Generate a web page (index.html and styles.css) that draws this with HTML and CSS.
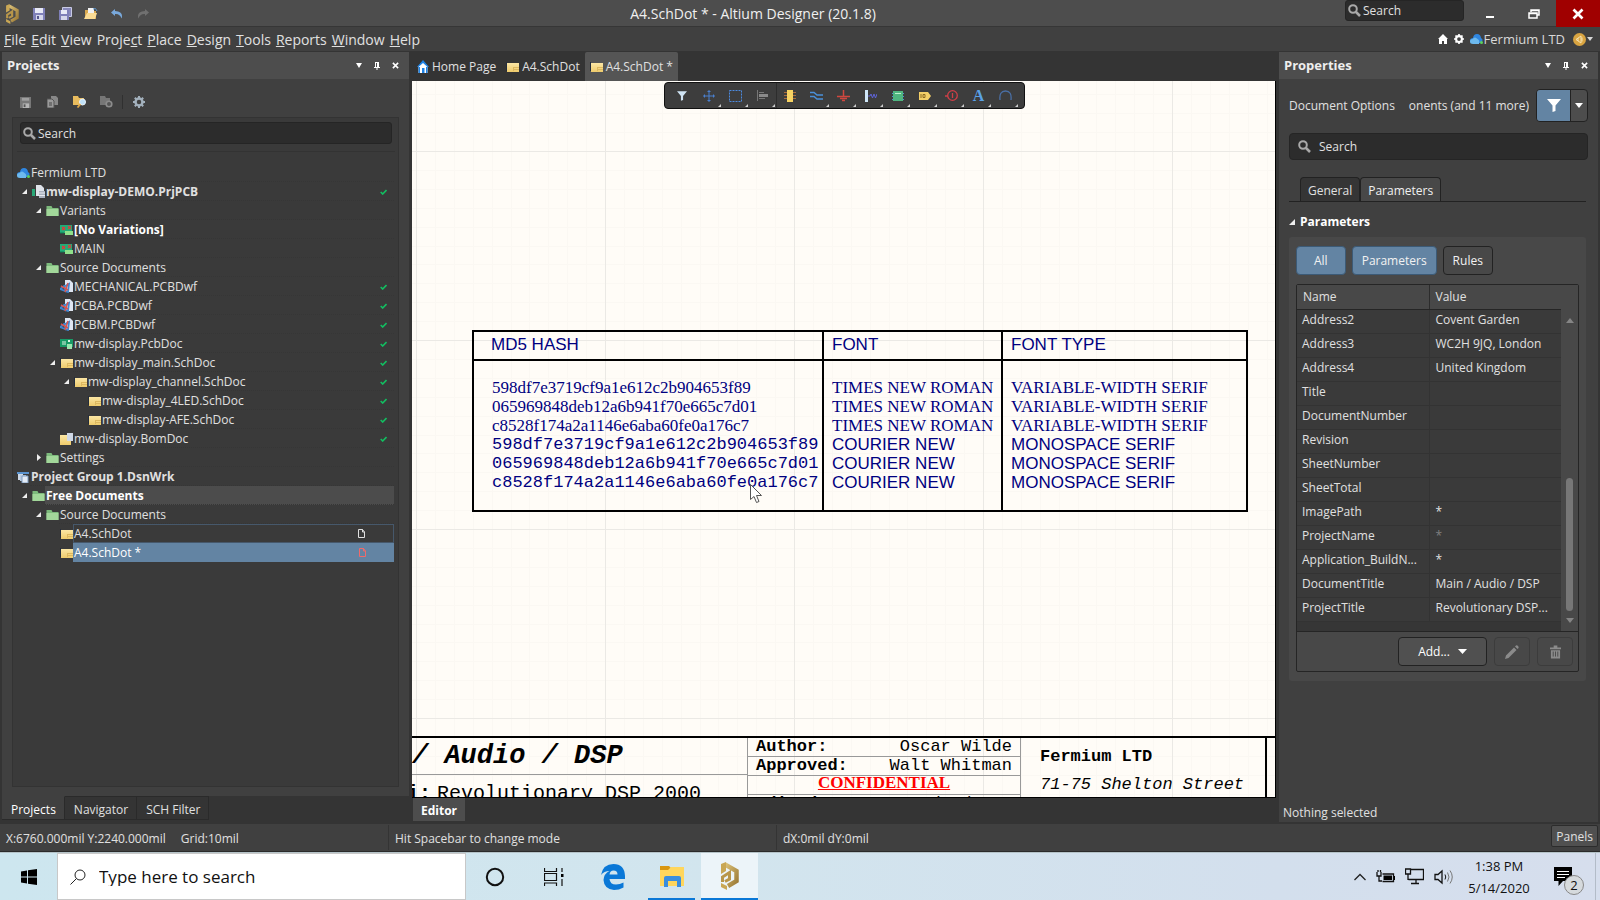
FILE: index.html
```html
<!DOCTYPE html>
<html lang="en">
<head>
    <meta charset="utf-8">
    <title>A4.SchDot * - Altium Designer (20.1.8)</title>
    <link rel="stylesheet" href="styles.css">
</head>
<body>
    <!-- shared icons -->
    <svg class="defs" width="0" height="0" aria-hidden="true">
        <defs>
            <linearGradient id="gold" x1="0" y1="0" x2="1" y2="1"><stop offset="0" stop-color="#dcc27a"/><stop offset="1" stop-color="#9c7a35"/></linearGradient>
            <linearGradient id="sheet" x1="0" y1="0" x2="0" y2="1"><stop offset="0" stop-color="#fbe6a4"/><stop offset="1" stop-color="#eecb6c"/></linearGradient>
            <pattern id="grid" width="189" height="189" patternUnits="userSpaceOnUse" x="4" y="70">
                <path d="M19.500 0V189M38.500 0V189M57.500 0V189M76.500 0V189M95.500 0V189M113.500 0V189M132.500 0V189M151.500 0V189M170.500 0V189M0 19.500H189M0 38.500H189M0 57.500H189M0 76.500H189M0 95.500H189M0 113.500H189M0 132.500H189M0 151.500H189M0 170.500H189" stroke="#fbf8f3"/>
                <path d="M.5 0V189M0 .5H189" stroke="#ebe9e5"/>
            </pattern>
        </defs>
        <symbol id="i-logo" viewBox="0 0 18 28">
            <path d="M4 2.500 15.500 9V19L7 24" fill="none" stroke="url(#gold)" stroke-width="4.500"/>
            <path d="M0 2 5 0V9L0 12ZM0 21 6 24V28L0 25Z" fill="#c9a755"/>
            <path d="M1.500 20V15L8.500 10.500V17L4 19.500" fill="none" stroke="#b8964a" stroke-width="3"/>
        </symbol>
        <symbol id="i-save" viewBox="0 0 12 12"><path d="M0 0H12V12H0Z" fill="#7f80b8"/><path d="M2 0H10V5H2Z" fill="#e8eaf6"/><path d="M3 7H10V12H3Z" fill="#d5d7ea"/><path d="M4 8H6V11H4Z" fill="#55568c"/></symbol>
        <symbol id="i-save-grey" viewBox="0 0 12 12"><path d="M0 0H12V12H0Z" fill="#777"/><path d="M2 1H10V4H2Z" fill="#a0a0a0"/><path d="M3 7H10V12H3Z" fill="#b5b5b5"/><path d="M4 8H6V11H4Z" fill="#555"/></symbol>
        <symbol id="i-saveall" viewBox="0 0 13 13"><path d="M3.500.5H12.500V9.500H3.500Z" fill="#8889bb" stroke="#c9cbe4"/><path d="M0 3H10V13H0Z" fill="#7f80b8"/><path d="M2 3H8V7H2Z" fill="#e8eaf6"/><path d="M2 9H8V13H2Z" fill="#d5d7ea"/></symbol>
        <symbol id="i-open" viewBox="0 0 14 13"><path d="M1 3H6L7 4H12V12H1Z" fill="#d9a951"/><path d="M4 1H10V7H4Z" fill="#f2f2f2"/><path d="M0 12 3 6H13L11 12Z" fill="#fbdc94"/><path d="M9 2Q12 0 13 4" fill="none" stroke="#5b93c9"/></symbol>
        <symbol id="i-undo" viewBox="0 0 12 10"><path d="M4 0 0 3.500 4 7V5Q9 4.500 10.500 9.500 13 3 4 2Z" fill="#79a9dc"/></symbol>
        <symbol id="i-redo" viewBox="0 0 12 10"><path d="M8 0 12 3.500 8 7V5Q3 4.500 1.500 9.500-1 3 8 2Z" fill="#707070"/></symbol>
        <symbol id="i-search" viewBox="0 0 13 13"><circle cx="5" cy="5" r="3.800" fill="none" stroke="#a9a9a9" stroke-width="2"/><path d="M8 8 12 12" stroke="#a9a9a9" stroke-width="2.500"/></symbol>
        <symbol id="i-caret" viewBox="0 0 6 5" preserveAspectRatio="none"><path d="M0 0H6L3 5Z" fill="currentColor"/></symbol>
        <symbol id="i-pin" viewBox="0 0 6 8"><path d="M1 0H5V5H6V6H0V5H1ZM2.500 6H3.500V8H2.500Z" fill="currentColor"/><path d="M2 1H3V5H2Z" fill="#4d4d4d"/></symbol>
        <symbol id="i-close" viewBox="0 0 8 8"><path d="M1 1 7 7M7 1 1 7" stroke="currentColor" stroke-width="1.800"/></symbol>
        <symbol id="i-min" viewBox="0 0 10 10"><path d="M1 7H9V9H1Z" fill="#fff"/></symbol>
        <symbol id="i-restore" viewBox="0 0 12 10"><path d="M3 3V1H11V6H9M3 1.500H11" fill="none" stroke="#fff" stroke-width="1.500"/><path d="M1 4H9V9H1ZM1 4.500H9" fill="none" stroke="#fff" stroke-width="1.500"/></symbol>
        <symbol id="i-house" viewBox="0 0 10 10"><path d="M5 0 10 5H9V10H6V7H4V10H1V5H0Z" fill="#fff"/></symbol>
        <symbol id="i-gear" viewBox="0 0 12 12"><circle cx="6" cy="6" r="3.500" fill="none" stroke="currentColor" stroke-width="2.500"/><path d="M6 0V2.500M6 9.500V12M0 6H2.500M9.500 6H12M1.800 1.800 3.500 3.500M8.500 8.500 10.200 10.200M1.800 10.200 3.500 8.500M8.500 3.500 10.200 1.800" stroke="currentColor" stroke-width="2"/></symbol>
        <symbol id="i-cloud" viewBox="0 0 13 10"><path d="M3 9Q0 9 0 6.500T3 4Q3.500 0 7 0T11 4Q13 5 12.500 7T10 9Z" fill="#2f86e0"/><path d="M3 10Q0 10 0 7.500T2.500 5Q5 2 7.500 5 10 6 9 10Z" fill="#6db9ee"/><circle cx="11.500" cy="8.500" r="1.500" fill="#5bd15b"/></symbol>
        <symbol id="i-home" viewBox="0 0 12 13"><path d="M1.500 6V13H10.500V6L6 2Z" fill="#fff"/><path d="M6 0 12 7H10.500L6 3 1.500 7H0ZM1.500 7H3V13H1.500ZM9 7H10.500V13H9Z" fill="#1e83e6"/><path d="M5 8H7.500V13H5Z" fill="#1e83e6"/></symbol>
        <symbol id="i-sch" viewBox="0 0 13 10"><path d="M1 1H13V10H1Z" fill="url(#sheet)"/><path d="M0 0H1V9H0Z" fill="#222c3c"/><path d="M7 5.500H13M7 7.500H13M7.500 5V9" stroke="#dcb860" fill="none"/></symbol>
        <symbol id="i-folder" viewBox="0 0 12 10"><path d="M0 0H5L6 2H12V10H0Z" fill="#7dba7c"/><path d="M0 3H12V10H0Z" fill="#a2d79a"/></symbol>
        <symbol id="i-variant" viewBox="0 0 13 10"><path d="M0 0H12V8H0Z" fill="#1fae78"/><path d="M5 6H13V10H5Z" fill="#8fe08a"/><path d="M2 2 5 5M5 2 2 5M8 1 11 4M11 1 8 4" stroke="#e23b3b" stroke-width="1.200"/><path d="M0 8H4" stroke="#0e7a52"/></symbol>
        <symbol id="i-prj" viewBox="0 0 13 13"><path d="M0 4H3V11H0ZM4 4H5V11H4Z" fill="#29a777"/><path d="M4 0H9L12 3V11H4Z" fill="#dfe3ea"/><path d="M7 6H13V13H7Z" fill="#aab0bd"/><path d="M7 8H13M7 10.500H13" stroke="#e8ebf0"/></symbol>
        <symbol id="i-dwf" viewBox="0 0 13 13"><path d="M5 0H10L13 3V12H5Z" fill="#dfe6f2"/><path d="M0 9 9 4 8 12ZM4 5 6 12" fill="none" stroke="#3f86d0" stroke-width="1.800"/><path d="M1 6 8 10M5 12 8 3" stroke="#d9544f" stroke-width="1.500"/></symbol>
        <symbol id="i-pcb" viewBox="0 0 13 10"><path d="M0 0H13V8H0Z" fill="#179a66"/><path d="M2 2H6V6H2Z" fill="#7ac6a4"/><path d="M7 5H12V10H7Z" fill="#9be7b0"/><path d="M8 1H10V3H8Z" fill="#d8f5e2"/></symbol>
        <symbol id="i-bom" viewBox="0 0 13 12"><path d="M0 2H11V12H0Z" fill="url(#sheet)"/><path d="M7 0H13V8H7Z" fill="#cfd8e6"/></symbol>
        <symbol id="i-group" viewBox="0 0 13 12"><path d="M0 1H12V3H0Z" fill="#5a93cf"/><path d="M1 3H6V9H1Z" fill="#cdd9e8"/><path d="M3 4H9V10H3Z" fill="#b8c9de"/><path d="M5 5H11V12H5Z" fill="#e4ecf6" stroke="#7c9cc2"/></symbol>
        <symbol id="i-expanded" viewBox="0 0 5 5"><path d="M5 0V5H0Z" fill="#eee"/></symbol>
        <symbol id="i-collapsed" viewBox="0 0 5 7"><path d="M1 0 5 3.500 1 7Z" fill="#eee"/></symbol>
        <symbol id="i-check" viewBox="0 0 7 6"><path d="M.7 3 2.700 5 6.500 1" fill="none" stroke="#12bf61" stroke-width="1.600"/></symbol>
        <symbol id="i-doc" viewBox="0 0 7 9"><path d="M.5.5H4.500L6.500 3V8.500H.5ZM4.500.5V3H6.500" fill="none" stroke="currentColor"/></symbol>
        <symbol id="i-funnel" viewBox="0 0 14 13"><path d="M0 0H14L8.500 6.500V12L5.500 13V6.500Z" fill="currentColor"/></symbol>
    </svg>

    <div class="desktop">
        <header class="titlebar">
            <div class="quick">
                <svg class="logo"><use href="#i-logo"/></svg>
                <button aria-label="Save"><svg width="12" height="12"><use href="#i-save"/></svg></button>
                <button aria-label="Save all"><svg width="13" height="13"><use href="#i-saveall"/></svg></button>
                <button aria-label="Open"><svg width="14" height="13"><use href="#i-open"/></svg></button>
                <button aria-label="Undo"><svg width="12" height="10"><use href="#i-undo"/></svg></button>
                <button aria-label="Redo"><svg width="12" height="10"><use href="#i-redo"/></svg></button>
            </div>
            <h1>A4.SchDot * - Altium Designer (20.1.8)</h1>
            <div class="window-tools">
                <label class="field title-search"><svg width="13" height="13"><use href="#i-search"/></svg><input type="text" placeholder="Search" aria-label="Search everywhere"></label>
                <button class="win" aria-label="Minimize"><svg width="10" height="10"><use href="#i-min"/></svg></button>
                <button class="win" aria-label="Restore"><svg width="12" height="10"><use href="#i-restore"/></svg></button>
                <button class="win win-close" aria-label="Close"><svg width="12" height="12"><use href="#i-close"/></svg></button>
            </div>
        </header>

        <nav class="menubar">
            <button><u>F</u>ile</button>
            <button><u>E</u>dit</button>
            <button><u>V</u>iew</button>
            <button>Proje<u>c</u>t</button>
            <button><u>P</u>lace</button>
            <button><u>D</u>esign</button>
            <button><u>T</u>ools</button>
            <button><u>R</u>eports</button>
            <button><u>W</u>indow</button>
            <button><u>H</u>elp</button>
            <div class="account">
                <svg width="10" height="10"><use href="#i-house"/></svg>
                <svg width="10" height="10"><use href="#i-gear"/></svg>
                <span class="server"><svg width="13" height="10"><use href="#i-cloud"/></svg>Fermium LTD</span>
                <span class="avatar"><svg width="13" height="13" viewBox="0 0 13 13"><circle cx="6.500" cy="6.500" r="6.500" fill="#d9a441"/><path d="M3 6.500 8 3V10ZM9 4.500V8.500M5 5V8" stroke="#f7e2b0" fill="none"/></svg><svg width="6" height="4"><use href="#i-caret"/></svg></span>
            </div>
        </nav>

        <main class="workspace">
            <section class="side">
                <div class="panel projects">
                    <div class="panel-head">
                        <h2>Projects</h2>
                        <button aria-label="Panel menu"><svg width="6" height="5"><use href="#i-caret"/></svg></button>
                        <button aria-label="Pin"><svg width="6" height="8"><use href="#i-pin"/></svg></button>
                        <button aria-label="Close panel"><svg width="7" height="7"><use href="#i-close"/></svg></button>
                    </div>
                    <div class="toolbar">
                        <button aria-label="Save document"><svg width="11" height="11"><use href="#i-save-grey"/></svg></button>
                        <button aria-label="Compile"><svg width="11" height="12" viewBox="0 0 11 12"><path d="M4 0H9L11 2V9H4Z" fill="#888"/><path d="M0 3H5L7 5V12H0Z" fill="#9a9a9a" stroke="#555"/><path d="M2 7H5M2 9H5" stroke="#444"/></svg></button>
                        <button aria-label="Explore"><svg width="14" height="12" viewBox="0 0 14 12"><path d="M0 0H5L6 2H11V9H0Z" fill="#e9bc5e"/><circle cx="9.500" cy="6" r="3" fill="#bfe0f7" stroke="#e8f3fb"/><path d="M7.500 8 4.500 11.500" stroke="#e0a948" stroke-width="1.800"/></svg></button>
                        <button aria-label="Project options"><svg width="13" height="12" viewBox="0 0 13 12"><path d="M0 0H5L6 2H10V9H0Z" fill="#777"/><circle cx="9" cy="8" r="2.800" fill="#555" stroke="#8c8c8c" stroke-width="1.600"/></svg></button>
                        <i class="sep"></i>
                        <button class="settings" aria-label="Settings"><svg width="12" height="12"><use href="#i-gear"/></svg></button>
                    </div>
                    <div class="tree-box">
                        <label class="field tree-search"><svg width="13" height="13"><use href="#i-search"/></svg><input type="text" placeholder="Search" aria-label="Search projects"></label>
                        <ul class="tree">
                            <li class="l0"><svg class="ic" height="10"><use href="#i-cloud"/></svg><span>Fermium LTD</span></li>
                            <li class="l1 bold"><svg class="arrow"><use href="#i-expanded"/></svg><svg class="ic" height="13"><use href="#i-prj"/></svg><span>mw-display-DEMO.PrjPCB</span><svg class="check"><use href="#i-check"/></svg></li>
                            <li class="l2"><svg class="arrow"><use href="#i-expanded"/></svg><svg class="ic" height="10"><use href="#i-folder"/></svg><span>Variants</span></li>
                            <li class="l3 bold white"><i class="arrow"></i><svg class="ic" height="10"><use href="#i-variant"/></svg><span>[No Variations]</span></li>
                            <li class="l3"><i class="arrow"></i><svg class="ic" height="10"><use href="#i-variant"/></svg><span>MAIN</span></li>
                            <li class="l2"><svg class="arrow"><use href="#i-expanded"/></svg><svg class="ic" height="10"><use href="#i-folder"/></svg><span>Source Documents</span></li>
                            <li class="l3"><i class="arrow"></i><svg class="ic" height="13"><use href="#i-dwf"/></svg><span>MECHANICAL.PCBDwf</span><svg class="check"><use href="#i-check"/></svg></li>
                            <li class="l3"><i class="arrow"></i><svg class="ic" height="13"><use href="#i-dwf"/></svg><span>PCBA.PCBDwf</span><svg class="check"><use href="#i-check"/></svg></li>
                            <li class="l3"><i class="arrow"></i><svg class="ic" height="13"><use href="#i-dwf"/></svg><span>PCBM.PCBDwf</span><svg class="check"><use href="#i-check"/></svg></li>
                            <li class="l3"><i class="arrow"></i><svg class="ic" height="10"><use href="#i-pcb"/></svg><span>mw-display.PcbDoc</span><svg class="check"><use href="#i-check"/></svg></li>
                            <li class="l3"><svg class="arrow"><use href="#i-expanded"/></svg><svg class="ic" height="10"><use href="#i-sch"/></svg><span>mw-display_main.SchDoc</span><svg class="check"><use href="#i-check"/></svg></li>
                            <li class="l4"><svg class="arrow"><use href="#i-expanded"/></svg><svg class="ic" height="10"><use href="#i-sch"/></svg><span>mw-display_channel.SchDoc</span><svg class="check"><use href="#i-check"/></svg></li>
                            <li class="l5"><i class="arrow"></i><svg class="ic" height="10"><use href="#i-sch"/></svg><span>mw-display_4LED.SchDoc</span><svg class="check"><use href="#i-check"/></svg></li>
                            <li class="l5"><i class="arrow"></i><svg class="ic" height="10"><use href="#i-sch"/></svg><span>mw-display-AFE.SchDoc</span><svg class="check"><use href="#i-check"/></svg></li>
                            <li class="l3"><i class="arrow"></i><svg class="ic" height="12"><use href="#i-bom"/></svg><span>mw-display.BomDoc</span><svg class="check"><use href="#i-check"/></svg></li>
                            <li class="l2"><svg class="arrow closed"><use href="#i-collapsed"/></svg><svg class="ic" height="10"><use href="#i-folder"/></svg><span>Settings</span></li>
                            <li class="l0 bold"><svg class="ic" height="12"><use href="#i-group"/></svg><span>Project Group 1.DsnWrk</span></li>
                            <li class="l1 bold white"><svg class="arrow"><use href="#i-expanded"/></svg><svg class="ic" height="10"><use href="#i-folder"/></svg><span class="group">Free Documents</span></li>
                            <li class="l2"><svg class="arrow"><use href="#i-expanded"/></svg><svg class="ic" height="10"><use href="#i-folder"/></svg><span>Source Documents</span></li>
                            <li class="l3"><i class="arrow"></i><svg class="ic" height="10"><use href="#i-sch"/></svg><span class="open">A4.SchDot<svg class="state"><use href="#i-doc"/></svg></span></li>
                            <li class="l3"><i class="arrow"></i><svg class="ic" height="10"><use href="#i-sch"/></svg><span class="selected">A4.SchDot *<svg class="state modified"><use href="#i-doc"/></svg></span></li>
                        </ul>
                    </div>
                </div>
                <div class="panel-tabs">
                    <button class="active">Projects</button>
                    <button>Navigator</button>
                    <button>SCH Filter</button>
                </div>
            </section>

            <section class="editor">
                <div class="doc-tabs">
                    <button><svg width="12" height="13"><use href="#i-home"/></svg>Home Page</button>
                    <button><svg width="13" height="10"><use href="#i-sch"/></svg>A4.SchDot</button>
                    <button class="active"><svg width="13" height="10"><use href="#i-sch"/></svg>A4.SchDot *</button>
                </div>
                <div class="canvas">
                    <svg class="grid" width="100%" height="100%"><rect width="100%" height="100%" fill="url(#grid)"/></svg>

                    <div class="active-bar">
                        <button class="plain" aria-label="Filter"><svg width="10" height="10" class="pale"><use href="#i-funnel"/></svg></button>
                        <button aria-label="Move"><svg width="12" height="12" viewBox="0 0 12 12"><path d="M6 0V12M0 6H12M4.500 1.500H7.500M4.500 10.500H7.500M1.500 4.500V7.500M10.500 4.500V7.500" stroke="#4a80cf"/></svg></button>
                        <button aria-label="Select"><svg width="13" height="12" viewBox="0 0 13 12"><path d="M.5.5H12.500V11.500H.5Z" fill="none" stroke="#4c8be0" stroke-dasharray="2 1"/></svg></button>
                        <button aria-label="Align"><svg width="11" height="11" viewBox="0 0 11 11"><path d="M.5 0V11M2 2.500H7M2 8.500H8" stroke="#777"/><path d="M2 4H11V7H2Z" fill="#8a8a8a"/></svg></button>
                        <button class="plain part" aria-label="Place part"><svg width="12" height="12" viewBox="0 0 12 12"><path d="M0 2.500H12M0 5.500H12M0 8.500H12" stroke="#a96b3b"/><path d="M3 0H9V12H3Z" fill="#f6d263"/></svg></button>
                        <button aria-label="Place wire"><svg width="13" height="9" viewBox="0 0 13 9"><path d="M0 1.500H4L7 4H13M0 5.500H4L7 8H13" fill="none" stroke="#4a90d9" stroke-width="1.500"/></svg></button>
                        <button aria-label="Place ground"><svg width="13" height="12" viewBox="0 0 13 12"><path d="M6.500 0V6M0 6.500H13M3 8.500H10M5 10.500H8" stroke="#d0473f" stroke-width="1.500"/></svg></button>
                        <button aria-label="Place harness"><svg width="12" height="12" viewBox="0 0 12 12"><path d="M0 0H3V12H0Z" fill="#cfe6f8"/><path d="M3 6H5L6 4 7.500 8 9 4 10.500 8 12 4" fill="none" stroke="#5e63d6"/></svg></button>
                        <button aria-label="Place sheet symbol"><svg width="12" height="10" viewBox="0 0 12 10"><path d="M0 2.500H12M0 5.500H12M0 8.500H12" stroke="#4a90d9"/><path d="M1 0H11V10H1Z" fill="#4fb580"/><path d="M3 2H9V3H3Z" fill="#bdf0cd"/></svg></button>
                        <button aria-label="Place port"><svg width="12" height="8" viewBox="0 0 12 8"><path d="M0 0H9L12 4 9 8H0Z" fill="#f4cf67"/><path d="M2 2V6M4 2.500H6V5.500H4Z" fill="none" stroke="#8c6a22"/></svg></button>
                        <button aria-label="Place directive"><svg width="13" height="12" viewBox="0 0 13 12"><circle cx="7.500" cy="5.500" r="4.800" fill="none" stroke="#cf3f47" stroke-width="1.300"/><path d="M0 6H3M7.500 3V8" stroke="#cf3f47" stroke-width="1.300"/></svg></button>
                        <button class="letter" aria-label="Place text">A</button>
                        <button aria-label="Place arc"><svg width="13" height="11" viewBox="0 0 13 11"><path d="M1 10Q0 1 6.500 1T12 10" fill="none" stroke="#4a6fa5" stroke-width="1.300"/></svg></button>
                    </div>

                    <table class="hash">
                        <colgroup><col class="c-hash"><col class="c-font"><col class="c-type"></colgroup>
                        <thead><tr><th>MD5 HASH</th><th>FONT</th><th>FONT TYPE</th></tr></thead>
                        <tbody>
                            <tr class="times"><td>598df7e3719cf9a1e612c2b904653f89</td><td>TIMES NEW ROMAN</td><td>VARIABLE-WIDTH SERIF</td></tr>
                            <tr class="times"><td>065969848deb12a6b941f70e665c7d01</td><td>TIMES NEW ROMAN</td><td>VARIABLE-WIDTH SERIF</td></tr>
                            <tr class="times"><td>c8528f174a2a1146e6aba60fe0a176c7</td><td>TIMES NEW ROMAN</td><td>VARIABLE-WIDTH SERIF</td></tr>
                            <tr class="courier"><td>598df7e3719cf9a1e612c2b904653f89</td><td>COURIER NEW</td><td>MONOSPACE SERIF</td></tr>
                            <tr class="courier"><td>065969848deb12a6b941f70e665c7d01</td><td>COURIER NEW</td><td>MONOSPACE SERIF</td></tr>
                            <tr class="courier"><td>c8528f174a2a1146e6aba60fe0a176c7</td><td>COURIER NEW</td><td>MONOSPACE SERIF</td></tr>
                        </tbody>
                    </table>

                    <svg class="pointer" width="13" height="20" viewBox="0 0 13 20"><path d="M.5.5V15.500L4 12.500 6.500 18.500 9 17.500 6.500 11.500H11.500Z" fill="#fff" stroke="#555"/></svg>

                    <!-- sheet title block, runs off the bottom of the view -->
                    <div class="title-block">
                        <div class="tb-main">
                            <p class="tb-title">/ Audio / DSP</p>
                            <p class="tb-project"><b>i:</b>Revolutionary DSP 2000</p>
                        </div>
                        <dl class="tb-people">
                            <div><dt>Author:</dt><dd>Oscar Wilde</dd></div>
                            <div><dt>Approved:</dt><dd>Walt Whitman</dd></div>
                            <div class="secret">CONFIDENTIAL</div>
                            <div><dt>Edited:</dt><dd>5/14/2020</dd></div>
                        </dl>
                        <address class="tb-address"><b>Fermium LTD</b><span>71-75 Shelton Street</span><span>Covent Garden</span></address>
                    </div>
                </div>
                <div class="editor-tabs"><button>Editor</button></div>
            </section>

            <aside class="panel properties">
                <div class="panel-head">
                    <h2>Properties</h2>
                    <button aria-label="Panel menu"><svg width="6" height="5"><use href="#i-caret"/></svg></button>
                    <button aria-label="Pin"><svg width="6" height="8"><use href="#i-pin"/></svg></button>
                    <button aria-label="Close panel"><svg width="7" height="7"><use href="#i-close"/></svg></button>
                </div>
                <div class="prop-body">
                    <div class="filter-row">
                        <span>Document Options</span>
                        <span class="scope">onents (and 11 more)</span>
                        <div class="split">
                            <button class="on" aria-label="Selection filter"><svg width="14" height="13"><use href="#i-funnel"/></svg></button>
                            <button aria-label="Filter list"><svg width="8" height="5"><use href="#i-caret"/></svg></button>
                        </div>
                    </div>
                    <label class="field prop-search"><svg width="13" height="13"><use href="#i-search"/></svg><input type="text" placeholder="Search" aria-label="Search properties"></label>
                    <div class="prop-tabs">
                        <button>General</button>
                        <button class="active">Parameters</button>
                    </div>
                    <h3><svg width="6" height="6"><use href="#i-expanded"/></svg>Parameters</h3>
                    <div class="group-box">
                        <div class="chips">
                            <button class="on">All</button>
                            <button class="on">Parameters</button>
                            <button>Rules</button>
                        </div>
                        <div class="list">
                            <div class="list-view">
                                <table class="params">
                                    <colgroup><col class="p-name"><col class="p-value"></colgroup>
                                    <thead><tr><th>Name</th><th>Value</th></tr></thead>
                                    <tbody>
                                        <tr><td>Address2</td><td>Covent Garden</td></tr>
                                        <tr><td>Address3</td><td>WC2H 9JQ, London</td></tr>
                                        <tr><td>Address4</td><td>United Kingdom</td></tr>
                                        <tr><td>Title</td><td></td></tr>
                                        <tr><td>DocumentNumber</td><td></td></tr>
                                        <tr><td>Revision</td><td></td></tr>
                                        <tr><td>SheetNumber</td><td></td></tr>
                                        <tr><td>SheetTotal</td><td></td></tr>
                                        <tr><td>ImagePath</td><td>*</td></tr>
                                        <tr><td>ProjectName</td><td class="dim">*</td></tr>
                                        <tr><td>Application_BuildN...</td><td>*</td></tr>
                                        <tr><td>DocumentTitle</td><td>Main / Audio / DSP</td></tr>
                                        <tr><td>ProjectTitle</td><td>Revolutionary DSP...</td></tr>
                                    </tbody>
                                </table>
                                <div class="scroll">
                                    <svg class="up" width="8" height="5"><use href="#i-caret"/></svg>
                                    <i class="thumb"></i>
                                    <svg width="8" height="5"><use href="#i-caret"/></svg>
                                </div>
                            </div>
                            <div class="list-foot">
                                <button class="add">Add...<svg width="9" height="5"><use href="#i-caret"/></svg></button>
                                <button class="off" aria-label="Edit"><svg width="14" height="14" viewBox="0 0 14 14"><path d="M0 14 1 10.500 9 2.500 11.500 5 3.500 13ZM10 1.500 11 .5Q12 0 13 1T13.500 3L12.500 4Z" fill="#8b8b8b"/></svg></button>
                                <button class="off" aria-label="Delete"><svg width="11" height="14" viewBox="0 0 12 14"><path d="M0 2H4V0H8V2H12V4H0ZM1 5H11V14H1Z" fill="#8b8b8b"/><path d="M3.500 6.500V12M6 6.500V12M8.500 6.500V12" stroke="#484848"/></svg></button>
                            </div>
                        </div>
                    </div>
                </div>
                <p class="selection">Nothing selected</p>
            </aside>
        </main>

        <footer class="status">
            <span class="coords"><span>X:6760.000mil Y:2240.000mil</span><span>Grid:10mil</span></span>
            <span class="hint">Hit Spacebar to change mode</span>
            <span class="delta">dX:0mil dY:0mil</span>
            <button>Panels</button>
        </footer>

        <div class="taskbar">
            <button class="start" aria-label="Start"><svg width="16" height="16" viewBox="0 0 16 16"><path d="M0 2.500 6 1.500V7.500H0ZM7 1.300 16 0V7.500H7ZM0 8.500H6V14.500L0 13.500ZM7 8.500H16V16L7 14.700Z" fill="#000"/></svg></button>
            <label class="task-search"><svg width="16" height="16" viewBox="0 0 16 16"><circle cx="10" cy="6" r="5" fill="none" stroke="#222"/><path d="M6.500 9.500.5 15.500" stroke="#222"/></svg><input type="text" placeholder="Type here to search" aria-label="Type here to search"></label>
            <button class="task" aria-label="Cortana"><svg width="20" height="20" viewBox="0 0 20 20"><circle cx="10" cy="10" r="8.200" fill="none" stroke="#111" stroke-width="2"/></svg></button>
            <button class="task" aria-label="Task view"><svg width="20" height="20" viewBox="0 0 20 20"><path d="M.5 1V4.500H12.500V1M.5 19V16H12.500V19M.5 6.500H12.500V13.500H.5ZM18 1V5M18 12V19" fill="none" stroke="#111" stroke-width="1.200"/><path d="M17 7H19.500V10H17Z"/></svg></button>
            <button class="task" aria-label="Edge"><svg width="24" height="26" viewBox="0 0 24 26"><path d="M0 11Q2 0 12.500 0 23.500 0 24 12V15H8.500Q9 20.500 15 20.500 19 20.500 22.500 18.500V23.500Q18 26 13 26 3 25 2.500 16 3 9.500 8.500 7 3 7 0 11ZM8.500 10.500H16.500Q16.500 6.500 12.500 6.500 9 6.500 8.500 10.500Z" fill="#0a78d7" fill-rule="evenodd"/></svg></button>
            <button class="task running" aria-label="File Explorer"><svg width="26" height="22" viewBox="0 0 26 22"><path d="M1 1H10L13 4V7H1Z" fill="#d9960f"/><path d="M1 5H9L12 2H25V21H1Z" fill="#ffd65c"/><path d="M5 22V13Q5 11 7 11H20Q22 11 22 13V22H18V16H9V22Z" fill="#3a8ede"/></svg></button>
            <button class="task running current" aria-label="Altium Designer"><svg width="18" height="28"><use href="#i-logo"/></svg></button>
            <div class="tray">
                <svg width="12" height="8" viewBox="0 0 12 8"><path d="M.5 7 6 1.500 11.500 7" fill="none" stroke="#222" stroke-width="1.300"/></svg>
                <svg width="19" height="14" viewBox="0 0 19 14"><path d="M1 2V6H5V2M2 2V0M4.500 2V0M3 6V11H6M6.500 4H17.500V11.500H6.500" fill="none" stroke="#111" stroke-width="1.300"/><path d="M7.500 5.500H16V10H7.500ZM18 6H19V10H18Z"/></svg>
                <svg width="19" height="17" viewBox="0 0 19 17"><path d="M6 1.500H18.500V11.500H3.500M11 12V15M6 15.500H14M.5 1H5.500V6H.5ZM3 6V12" fill="none" stroke="#111" stroke-width="1.300"/></svg>
                <svg width="20" height="16" viewBox="0 0 20 16"><path d="M1 5.500H4L8 2V14L4 10.500H1Z" fill="none" stroke="#111" stroke-width="1.300"/><path d="M11 5.500Q12.500 8 11 10.500" fill="none" stroke="#111"/><path d="M13.500 3.500Q16.500 8 13.500 12.500M16 1.500Q20.500 8 16 14.500" fill="none" stroke="#777"/></svg>
            </div>
            <div class="clock"><span>1:38 PM</span><span>5/14/2020</span></div>
            <button class="notes" aria-label="Notifications"><svg width="18" height="19" viewBox="0 0 18 19"><path d="M0 0H18V14H9L4.500 19V14H0Z"/><path d="M3 4.500H15M3 7.500H15M3 10.500H11" stroke="#fff"/></svg><span class="badge">2</span></button>
        </div>
    </div>
</body>
</html>
```
FILE: styles.css
```css
* {
    box-sizing: border-box;
}
body {
    margin: 0;
    font-family: "Open Sans", "Noto Sans", sans-serif;
    font-size: 12px;
    line-height: 19px;
    color: #e0e0e0;
    background: #343434;
}
button, input {
    font: inherit;
    color: inherit;
    background: none;
    border: 0;
    padding: 0;
    margin: 0;
}
button {
    display: flex;
    align-items: center;
    justify-content: center;
    white-space: nowrap;
}
input::placeholder {
    color: inherit;
    opacity: 1;
}
svg {
    display: block;
    flex: none;
}
h1, h2, h3, p, ul, dl, dd {
    margin: 0;
    padding: 0;
}
.defs {
    position: absolute;
}
.desktop {
    display: flex;
    flex-direction: column;
    height: 100vh;
    overflow: hidden;
}
.field {
    display: flex;
    align-items: center;
    background: #2c2c2c;
    border: 1px solid #252525;
    border-radius: 3px;
}
.field input {
    flex: 1;
    min-width: 0;
}

/* title bar */
.titlebar {
    display: grid;
    grid-template-columns: 1fr auto 1fr;
    height: 27px;
    background: #4d4d4d;
    border-bottom: 1px solid #363636;
}
.titlebar h1 {
    font-size: 14px;
    font-weight: 400;
    line-height: 27px;
    color: #f0f0f0;
    padding-right: 94px;
}
.quick {
    display: flex;
    align-items: center;
    gap: 14px;
    padding-left: 6px;
}
.quick button {
    width: 12px;
}
.logo {
    width: 13px;
    height: 20px;
}
.window-tools {
    display: flex;
    justify-content: flex-end;
}
.title-search {
    width: 119px;
    height: 21px;
    padding-left: 2px;
    gap: 2px;
    margin-right: 4px;
}
.win {
    width: 44px;
}
.win-close {
    background: #a00000;
    color: #fff;
}

/* menu */
.menubar {
    display: flex;
    align-items: center;
    gap: 5px;
    height: 24px;
    padding: 0 7px 0 4px;
    background: #404040;
    font-size: 14px;
}
.account {
    display: flex;
    align-items: center;
    gap: 6px;
    margin-left: auto;
    font-size: 13px;
    color: #fff;
}
.server, .avatar {
    display: flex;
    align-items: center;
    gap: 1px;
    color: #d8d8d8;
}
.avatar {
    margin-left: 2px;
}

/* workspace */
.workspace {
    flex: 1;
    display: flex;
    min-height: 0;
    padding: 1px 2px 2px;
}
.side {
    width: 407px;
    display: flex;
    flex-direction: column;
    margin-right: 3px;
}
.panel {
    display: flex;
    flex-direction: column;
    background: #404040;
}
.projects {
    flex: 1;
}
.panel-head {
    display: flex;
    align-items: center;
    gap: 12px;
    height: 27px;
    padding: 0 10px 0 5px;
    background: #4d4d4d;
    color: #fff;
}
.panel-head h2 {
    flex: 1;
    font-size: 13px;
    font-weight: 700;
    color: #eee;
}
.toolbar {
    display: flex;
    align-items: center;
    gap: 12px;
    height: 38px;
    padding: 8px 16px 0;
}
.toolbar button {
    width: 15px;
}
.sep {
    width: 1px;
    height: 14px;
    margin: 0 -4px;
    background: #303030;
}
.toolbar .settings {
    color: #a3b1bd;
}
.tree-box {
    flex: 1;
    margin: 0 10px 9px;
    padding: 4px 3px 0 4px;
    border: 1px solid #333;
    background: #3a3a3a;
}
.tree-search {
    height: 22px;
    margin: 0 3px;
    padding-left: 2px;
    gap: 2px;
}
.tree {
    list-style: none;
    margin: 7px 0 0;
    padding-top: 11px;
    border-top: 1px solid #333;
}
.tree li {
    display: flex;
    align-items: center;
    height: 19px;
}
.tree li span {
    display: flex;
    flex: 1;
    align-items: center;
    height: 19px;
    padding-left: 1px;
    margin-right: 1px;
    border-bottom: 1px dotted #363636;
}
.tree .ic {
    width: 13px;
}
.tree .arrow {
    width: 5px;
    height: 5px;
    margin-right: 5px;
}
.tree .closed {
    height: 7px;
}
.tree .l0 {
    padding-left: 0;
}
.tree .l1 {
    padding-left: 5px;
}
.tree .l2 {
    padding-left: 19px;
}
.tree .l3 {
    padding-left: 33px;
}
.tree .l4 {
    padding-left: 47px;
}
.tree .l5 {
    padding-left: 61px;
}
.bold {
    font-weight: 700;
}
.white {
    color: #fff;
}
.tree .check {
    width: 7px;
    height: 6px;
    margin: 0 8px 0 -15px;
}
.tree .group {
    background: #4c4c4c;
}
.tree .open {
    border: 1px solid #46586b;
    padding-left: 0;
}
.tree .selected {
    background: #6384a3;
    border: 0;
    color: #fff;
}
.state {
    width: 7px;
    height: 9px;
    margin-left: auto;
    margin-right: 28px;
}
.modified {
    color: #f06a6a;
}
.panel-tabs {
    display: flex;
    height: 26px;
}
.panel-tabs button {
    height: 24px;
    padding: 2px 8px 0 9px;
    border: 1px solid #2a2a2a;
    border-left-width: 0;
}
.panel-tabs .active {
    background: #404040;
    border-top-color: #404040;
    color: #fff;
}

/* editor */
.editor {
    flex: 1;
    min-width: 0;
    display: flex;
    flex-direction: column;
}
.doc-tabs {
    display: flex;
    height: 29px;
}
.doc-tabs button {
    gap: 3px;
    padding: 0 5px 0 5px;
}
.doc-tabs .active {
    background: #555;
    border-radius: 2px 2px 0 0;
}
.canvas {
    position: relative;
    flex: 1;
    overflow: hidden;
    background: #fffcf7;
    border: solid #000;
    border-width: 0 1px 1px 0;
}
.grid {
    position: absolute;
    inset: 0;
}
.active-bar {
    position: absolute;
    top: 1px;
    left: 252px;
    display: flex;
    height: 27px;
    padding: 0 5px 0 3px;
    background: #3d3d3d;
    border: 1px solid #111;
    border-radius: 4px;
}
.active-bar button {
    position: relative;
    width: 27px;
}
.active-bar button::after {
    content: "";
    position: absolute;
    right: 1px;
    bottom: 1px;
    border: solid transparent;
    border-width: 3px 0 0 3px;
    border-right: 3px solid #ccc;
    border-top-color: transparent;
    border-left-width: 0;
}
.active-bar .plain::after {
    display: none;
}
.active-bar .pale {
    color: #cfe3f3;
}
.active-bar .part {
    border-left: 1px solid #2d2d2d;
}
.active-bar .letter {
    font: bold 16px "Liberation Serif", serif;
    color: #5aa2e6;
}
.hash {
    position: absolute;
    top: 249px;
    left: 60px;
    width: 776px;
    table-layout: fixed;
    border-collapse: collapse;
    border: 2px solid #000;
    font: 17px/19px "Liberation Sans", sans-serif;
    color: #000080;
}
.c-hash {
    width: 350px;
}
.c-font {
    width: 179px;
}
.hash th {
    height: 29px;
    padding: 0 8px 2px;
    border: 2px solid #000;
    font-weight: 400;
    text-align: left;
}
.hash th:first-child {
    padding-left: 17px;
}
.hash td {
    height: 19px;
    padding: 0 8px;
    border: solid #000;
    border-width: 0 2px;
    white-space: nowrap;
}
.hash td:first-child {
    padding-left: 18px;
    padding-right: 0;
}
.hash tbody tr:first-child td {
    height: 36px;
    padding-top: 17px;
}
.hash tbody tr:last-child td {
    height: 37px;
    padding-bottom: 18px;
}
.times td {
    font-family: "Liberation Serif", serif;
}
.courier td:first-child {
    font-family: "Liberation Mono", monospace;
}
.pointer {
    position: absolute;
    top: 403px;
    left: 338px;
}
.title-block {
    position: absolute;
    left: 0;
    right: 0;
    top: 655px;
    display: grid;
    grid-template-columns: 335px 274px 1fr;
    height: 90px;
    border-top: 2px solid #000;
    font: 17px/17px "Liberation Mono", monospace;
    color: #000;
    white-space: nowrap;
}
.title-block p {
    height: 37px;
    border-bottom: 1px solid #999;
}
.title-block .tb-title {
    font-size: 27px;
    font-weight: 700;
    font-style: italic;
    line-height: 36px;
}
.title-block .tb-project {
    font-size: 20px;
    line-height: 38px;
    border: 0;
}
.tb-project b {
    margin: 0 6px 0 -5px;
}
.tb-people {
    border: solid #999;
    border-width: 0 1px;
}
.tb-people div {
    display: flex;
    justify-content: space-between;
    height: 19px;
    padding: 0 8px;
    border-bottom: 1px solid #999;
}
.tb-people dt {
    font-weight: 700;
}
.tb-people .secret {
    justify-content: center;
    font-family: "Liberation Serif", serif;
    font-weight: 700;
    line-height: 14px;
    color: #f00;
    text-decoration: underline;
}
.tb-address {
    display: flex;
    flex-direction: column;
    gap: 11px;
    margin-right: 8px;
    padding: 10px 0 0 19px;
    border-right: 2px solid #000;
}
.tb-address b {
    font-style: normal;
}
.editor-tabs {
    height: 24px;
    display: flex;
    padding-left: 1px;
}
.editor-tabs button {
    height: 23px;
    padding: 2px 8px 0;
    background: #4d4d4d;
    color: #fff;
    font-weight: 700;
}

/* properties */
.properties {
    width: 319px;
    margin-left: 3px;
}
.prop-body {
    flex: 1;
    padding: 10px 10px 0;
}
.filter-row {
    display: flex;
    align-items: center;
    white-space: nowrap;
}
.scope {
    display: flex;
    justify-content: flex-end;
    flex: 1;
    overflow: hidden;
    margin: 0 7px 0 10px;
}
.split {
    display: flex;
    height: 33px;
    border: 1px solid #222;
    border-radius: 4px;
    background: #4d4d4d;
    color: #fff;
    overflow: hidden;
}
.split button {
    width: 16px;
}
.split .on {
    width: 34px;
    border-right: 1px solid #222;
}
.on {
    background: #6384a3;
}
.prop-search {
    height: 27px;
    margin-top: 11px;
    padding-left: 8px;
    gap: 8px;
    border-radius: 4px;
}
.prop-tabs {
    display: flex;
    margin: 17px 2px 0 0;
    padding-left: 11px;
    border-bottom: 1px solid #222;
}
.prop-tabs button {
    height: 24px;
    padding: 1px 7px 0;
    background: #353535;
    border: 1px solid #222;
    border-bottom: 0;
    border-radius: 4px 4px 0 0;
}
.prop-tabs .active {
    background: #484848;
    color: #f0f0f0;
}
.prop-body h3 {
    display: flex;
    align-items: center;
    gap: 5px;
    margin: 10px 0 6px;
    font-size: 12px;
    font-weight: 700;
    color: #fff;
}
.group-box {
    margin-right: 2px;
    padding: 9px 7px;
    border-radius: 3px;
    background: #484848;
}
.chips {
    display: flex;
    gap: 6px;
}
.chips button {
    height: 29px;
    padding: 0 9px;
    border: 1px solid #222;
    border-radius: 4px;
    color: #f2f2f2;
}
.chips .on {
    border-color: #3c5a76;
}
.chips button:first-child {
    padding: 0 17px;
}
.list {
    margin-top: 9px;
    border: 1px solid #252525;
    border-radius: 2px;
}
.list-view {
    display: flex;
    height: 347px;
    background: #363636;
    border-bottom: 1px solid #252525;
}
.params {
    flex: 1;
    align-self: flex-start;
    table-layout: fixed;
    border-collapse: collapse;
}
.p-name {
    width: 50%;
}
.params th {
    height: 24px;
    padding: 0 6px;
    background: #484848;
    border-bottom: 1px solid #252525;
    font-weight: 400;
    text-align: left;
}
.params th:first-child {
    border-right: 1px solid #2c2c2c;
}
.params td {
    height: 24px;
    padding: 0 0 4px 5px;
    background: #3a3a3a;
    border-bottom: 1px solid #333;
    white-space: nowrap;
    overflow: hidden;
}
.params td + td {
    padding-left: 6px;
    border-left: 1px solid #333;
}
.params .dim {
    color: #808080;
}
.scroll {
    display: flex;
    flex-direction: column;
    align-items: center;
    width: 17px;
    padding: 33px 0 8px;
    background: #484848;
    color: #858585;
}
.scroll .up {
    rotate: 180deg;
}
.thumb {
    width: 7px;
    height: 133px;
    margin: auto 0 7px;
    border-radius: 4px;
    background: #777;
}
.list-foot {
    display: flex;
    justify-content: flex-end;
    gap: 7px;
    padding: 5px;
}
.list-foot button {
    width: 36px;
    height: 29px;
    border: 1px solid #3c3c3c;
    border-radius: 4px;
}
.list-foot .add {
    width: 89px;
    gap: 8px;
    border-color: #222;
    background: #505050;
    color: #fff;
}
.selection {
    padding: 1px 4px 0;
    line-height: 18px;
}

/* status bar */
.status {
    display: grid;
    grid-template-columns: 388px 388px 1fr auto;
    align-items: center;
    height: 28px;
    padding-right: 2px;
    background: #404040;
    border-bottom: 1px solid #2a2a2a;
}
.coords {
    display: flex;
    gap: 15px;
    padding: 2px 0 0 6px;
}
.hint, .delta {
    padding: 4px 6px 2px;
    border-left: 1px solid #343434;
}
.status button {
    align-self: start;
    height: 22px;
    margin-top: 1px;
    padding: 0 4px;
    background: #505050;
    border: 1px solid #2c2c2c;
    border-radius: 2px;
}

/* taskbar */
.taskbar {
    display: flex;
    height: 48px;
    color: #111;
    background: linear-gradient(90deg, #cde6ef, #d2e5ee 45%, #d3dfed 80%, #d6deed);
    border-top: 1px solid #b5c3c8;
}
.start {
    width: 57px;
}
.task-search {
    display: flex;
    align-items: center;
    gap: 13px;
    width: 409px;
    padding-left: 12px;
    background: #fff;
    border: 1px solid #c8c8c8;
    font-size: 17px;
}
.task-search input {
    flex: 1;
}
.task {
    width: 57px;
    margin-right: 2px;
}
.running {
    border-bottom: 2px solid #0a78d7;
    width: 47px;
    margin: 0 6px 0 5px;
}
.current {
    width: 57px;
    margin: 0;
    background: #ecf4f9;
}
.tray {
    display: flex;
    align-items: center;
    gap: 10px;
    margin-left: auto;
}
.clock {
    display: flex;
    flex-direction: column;
    width: 90px;
    padding-top: 2px;
    font-size: 13px;
    line-height: 22px;
    text-align: center;
}
.notes {
    position: relative;
    width: 52px;
    padding-right: 13px;
    border-right: 1px solid #b3bcc8;
    margin-right: 4px;
}
.badge {
    position: absolute;
    top: 22px;
    left: 20px;
    width: 20px;
    height: 20px;
    border: 1px solid #888;
    border-radius: 50%;
    background: #d6dadd;
    font-size: 13px;
    line-height: 18px;
    text-align: center;
}
```
